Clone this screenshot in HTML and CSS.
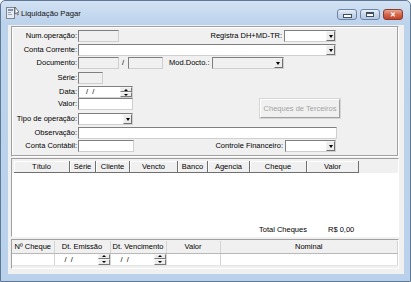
FILE: index.html
```html
<!DOCTYPE html>
<html lang="pt-BR">
<head>
    <meta charset="UTF-8">
    <title>Liquidação Pagar</title>
    <link rel="stylesheet" href="styles.css">
</head>
<body>
    <div class="window">
        <!-- Barra de título -->
        <div class="titlebar">
            <svg class="app-icon" width="14" height="14" viewBox="0 0 14 14">
                <rect x="1.5" y="1.5" width="8" height="11" fill="#e8ecf2" stroke="#7d8794"/>
                <rect x="3" y="3" width="5" height="2" fill="#7f93ad"/>
                <rect x="3" y="6" width="3" height="1" fill="#9aa6b5"/>
                <rect x="3" y="8" width="4" height="1" fill="#9aa6b5"/>
                <path d="M10 1 L10 8 L11.5 6.8 L12.6 9 L13.4 8.6 L12.3 6.4 L14 6.2 Z" fill="#fff" stroke="#333" stroke-width="0.6"/>
            </svg>
            <span class="title">Liquidação Pagar</span>
            <div class="caption-buttons">
                <span class="cb cb-min"><i></i></span>
                <span class="cb cb-max"><i></i></span>
                <span class="cb cb-close">✕</span>
            </div>
        </div>

        <div class="client">
            <!-- Dados da operação -->
            <div class="panel form">
                <div class="row">
                    <label class="lbl">Num.operação:</label>
                    <span class="edit off w41"></span>
                    <div class="right-group">
                        <label class="rlbl">Registra DH+MD-TR:</label>
                        <span class="edit combo w52"><span class="drop"></span></span>
                    </div>
                </div>
                <div class="row">
                    <label class="lbl">Conta Corrente:</label>
                    <span class="edit combo w258"><span class="drop"></span></span>
                </div>
                <div class="row">
                    <label class="lbl">Documento:</label>
                    <span class="edit off w41"></span>
                    <span class="slash">/</span>
                    <span class="edit off w35"></span>
                    <label class="rlbl mod">Mod.Docto.:</label>
                    <span class="edit combo off w72"><span class="drop"></span></span>
                </div>
                <div class="row">
                    <label class="lbl">Série:</label>
                    <span class="edit off w25"></span>
                </div>
                <div class="row">
                    <label class="lbl">Data:</label>
                    <span class="edit date w55"><span class="date-text">/ &nbsp;/</span><span class="spin"><span class="up"></span><span class="down"></span></span></span>
                </div>
                <div class="row">
                    <label class="lbl">Valor:</label>
                    <span class="edit w55"></span>
                    <button class="btn-terceiros" disabled>Cheques de Terceiros</button>
                </div>
                <div class="row">
                    <label class="lbl">Tipo de operação:</label>
                    <span class="edit combo w55"><span class="drop"></span></span>
                </div>
                <div class="row">
                    <label class="lbl">Observação:</label>
                    <span class="edit w259"></span>
                </div>
                <div class="row">
                    <label class="lbl">Conta Contábil:</label>
                    <span class="edit w56"></span>
                    <div class="right-group">
                        <label class="rlbl">Controle Financeiro:</label>
                        <span class="edit combo w51"><span class="drop"></span></span>
                    </div>
                </div>
            </div>

            <!-- Grade de cheques -->
            <div class="panel cheques">
                <div class="grid">
                    <div class="grid-head">
                        <span class="hc" style="width:56px">Título</span>
                        <span class="hc" style="width:26px">Série</span>
                        <span class="hc" style="width:34px">Cliente</span>
                        <span class="hc" style="width:48px">Vencto</span>
                        <span class="hc" style="width:30px">Banco</span>
                        <span class="hc" style="width:42px">Agencia</span>
                        <span class="hc" style="width:57px">Cheque</span>
                        <span class="hc" style="width:52px">Valor</span>
                    </div>
                    <div class="grid-body"></div>
                    <div class="totals">
                        <span class="tot-label">Total Cheques</span>
                        <span class="tot-value">R$ 0,00</span>
                    </div>
                </div>
            </div>

            <!-- Lançamento do cheque -->
            <div class="panel entry">
                <table class="entry-table">
                    <tr>
                        <th style="width:42px">Nº Cheque</th>
                        <th style="width:56px">Dt. Emissão</th>
                        <th style="width:56px">Dt. Vencimento</th>
                        <th style="width:54px">Valor</th>
                        <th>Nominal</th>
                    </tr>
                    <tr>
                        <td></td>
                        <td><div class="cell-date"><span class="date-text">/ &nbsp;/</span><span class="spin"><span class="up"></span><span class="down"></span></span></div></td>
                        <td><div class="cell-date"><span class="date-text">/ &nbsp;/</span><span class="spin"><span class="up"></span><span class="down"></span></span></div></td>
                        <td></td>
                        <td></td>
                    </tr>
                </table>
            </div>
        </div>
    </div>
</body>
</html>
```

FILE: styles.css
```css
body {
    margin: 0;
    background: #ffffff;
    font-family: "Liberation Sans", Arial, sans-serif;
    font-size: 7.5px;
    color: #000;
}

/* Janela */
.window {
    width: 411px;
    height: 282px;
    box-sizing: border-box;
    border: 1px solid #5f7896;
    border-radius: 5px 5px 0 0;
    background: linear-gradient(#d3e2f3, #bcd3ec 22px, #b9d1ea);
    display: flex;
    flex-direction: column;
}

/* Barra de título */
.titlebar {
    height: 24px;
    display: flex;
    align-items: center;
    padding-left: 4px;
    box-sizing: border-box;
}

.app-icon {
    display: block;
    margin-right: 2px;
}

.title {
    font-size: 7.7px;
    color: #111;
    flex: 1;
}

.caption-buttons {
    display: flex;
    gap: 3px;
    margin-right: 7px;
    align-self: flex-start;
    margin-top: 8px;
}

.cb {
    width: 20px;
    height: 11px;
    box-sizing: border-box;
    border: 1px solid #6d84a6;
    border-radius: 3px;
    background: linear-gradient(#e9f0f8, #c6d5e8 50%, #b7c9e0);
    display: flex;
    align-items: center;
    justify-content: center;
}

.cb-min i {
    width: 7px;
    height: 2px;
    margin-top: 3px;
    background: #fff;
    border: 1px solid #3d4f66;
}

.cb-max i {
    width: 6px;
    height: 3px;
    background: #fff;
    border: 1px solid #3d4f66;
    box-shadow: inset 0 1px 0 #3d4f66;
}

.cb-close {
    border-color: #8a3b2c;
    background: linear-gradient(#e8a793, #d4664a 50%, #c2442a);
    color: #fff;
    font-size: 7px;
    font-weight: bold;
    line-height: 1;
}

/* Área cliente */
.client {
    flex: 1;
    margin: 0 6px 7px 7px;
    background: #f0f0f0;
    display: flex;
    flex-direction: column;
}

.panel {
    margin: 1px 5px 0 3px;
    border: 1px solid;
    border-color: #a0a0a0 #ffffff #ffffff #a0a0a0;
    box-shadow: inset -1px -1px 0 #a0a0a0, inset 1px 1px 0 #ffffff;
}

/* Formulário */
.form {
    height: 131px;
    box-sizing: border-box;
    padding-top: 3px;
    display: grid;
    grid-template-rows: 14px 13px 15px 14px 12px 15px 14px 13px 12px;
}

.row {
    display: flex;
    align-items: flex-start;
}

.lbl {
    width: 65px;
    padding-right: 1px;
    text-align: right;
    line-height: 12px;
    white-space: nowrap;
}

.rlbl {
    line-height: 12px;
    white-space: nowrap;
    margin-right: 2px;
}

.right-group {
    display: flex;
    margin-left: auto;
    margin-right: 62px;
}

.edit {
    display: flex;
    justify-content: flex-end;
    height: 12px;
    box-sizing: border-box;
    border: 1px solid;
    border-color: #7f7f7f #cfcfcf #cfcfcf #7f7f7f;
    background: #fff;
}

.edit.off {
    background: #f0f0f0;
}

.w25 { width: 25px; }
.w35 { width: 35px; }
.w41 { width: 41px; }
.w51 { width: 51px; }
.w52 { width: 52px; }
.w55 { width: 55px; }
.w56 { width: 56px; }
.w72 { width: 72px; }
.w258 { width: 258px; }
.w259 { width: 259px; }

.slash {
    line-height: 12px;
    margin: 0 4px 0 3px;
}

.mod {
    margin-left: 6px;
}

/* Botão do combo */
.drop {
    width: 9px;
    height: 10px;
    box-sizing: border-box;
    border: 1px solid;
    border-color: #f4f4f4 #707070 #707070 #f4f4f4;
    background: #ececec;
    display: flex;
    align-items: center;
    justify-content: center;
}

.drop::before {
    content: "";
    border-left: 2.5px solid transparent;
    border-right: 2.5px solid transparent;
    border-top: 3px solid #000;
}

/* Campo de data com spin */
.date {
    justify-content: space-between;
}

.date-text {
    line-height: 10px;
    padding-left: 7px;
    white-space: pre;
}

.spin {
    width: 12px;
    display: flex;
    flex-direction: column;
}

.spin .up,
.spin .down {
    flex: 1;
    box-sizing: border-box;
    border: 1px solid;
    border-color: #f6f6f6 #7a7a7a #7a7a7a #f6f6f6;
    background: #ececec;
    display: flex;
    align-items: center;
    justify-content: center;
}

.spin .up::before {
    content: "";
    border-left: 2px solid transparent;
    border-right: 2px solid transparent;
    border-bottom: 2px solid #000;
}

.spin .down::before {
    content: "";
    border-left: 2px solid transparent;
    border-right: 2px solid transparent;
    border-top: 2px solid #000;
}

.btn-terceiros {
    margin: 1px 0 0 127px;
    width: 80px;
    height: 19px;
    flex-shrink: 0;
    padding: 0;
    font-family: inherit;
    font-size: 7.5px;
    color: #a4a4a4;
    background: #f0f0f0;
    border: 1px solid;
    border-color: #ffffff #a0a0a0 #a0a0a0 #ffffff;
    box-shadow: 0 0 0 1px #d6d6d6;
}

/* Grade de cheques */
.cheques {
    height: 79px;
    box-sizing: border-box;
    padding-top: 2px;
    display: flex;
    box-shadow: none;
}

.grid {
    flex: 1;
    background: #fff;
    display: flex;
    flex-direction: column;
    padding-left: 2px;
}

.grid-head {
    display: flex;
    height: 12px;
    background: #f0f0f0;
    margin-left: -2px;
    padding-left: 2px;
}

.hc {
    box-sizing: border-box;
    height: 12px;
    line-height: 11px;
    text-align: center;
    border-right: 1px solid #6f6f6f;
    border-bottom: 1px solid #6f6f6f;
    box-shadow: inset 1px 1px 0 #ffffff;
}

.grid-body {
    flex: 1;
}

.totals {
    display: flex;
    height: 11px;
    line-height: 9px;
    padding-left: 245px;
}

.tot-label {
    width: 69px;
}

/* Lançamento do cheque */
.entry {
    margin-top: 2px;
    height: 30px;
    box-sizing: border-box;
    padding-top: 1px;
    box-shadow: none;
}

.entry-table {
    width: 100%;
    border-collapse: collapse;
    table-layout: fixed;
    background: #fff;
    border-right: 1px solid #6f6f6f;
}

.entry-table th,
.entry-table td {
    padding: 0;
    height: 12px;
    box-sizing: border-box;
    border-right: 1px solid #d4d4d4;
    font-weight: normal;
    text-align: center;
    line-height: 11px;
}

.entry-table th {
    background: #f0f0f0;
    border-bottom: 1px solid #b8b8b8;
}

.entry-table td {
    border-bottom: 1px solid #e4e4e4;
}

.cell-date {
    display: flex;
    justify-content: space-between;
    height: 11px;
}

.cell-date .date-text {
    line-height: 11px;
    padding-left: 10px;
}
```
